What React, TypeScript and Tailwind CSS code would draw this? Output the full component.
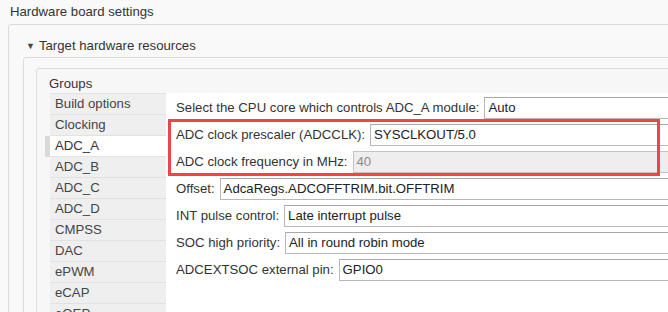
const groups = [
  "Build options",
  "Clocking",
  "ADC_A",
  "ADC_B",
  "ADC_C",
  "ADC_D",
  "CMPSS",
  "DAC",
  "ePWM",
  "eCAP",
  "eQEP",
];

const fields: { label: string; value: string; disabled?: boolean }[] = [
  { label: "Select the CPU core which controls ADC_A module:", value: "Auto" },
  { label: "ADC clock prescaler (ADCCLK):", value: "SYSCLKOUT/5.0" },
  { label: "ADC clock frequency in MHz:", value: "40", disabled: true },
  { label: "Offset:", value: "AdcaRegs.ADCOFFTRIM.bit.OFFTRIM" },
  { label: "INT pulse control:", value: "Late interrupt pulse" },
  { label: "SOC high priority:", value: "All in round robin mode" },
  { label: "ADCEXTSOC external pin:", value: "GPIO0" },
];

function Field({ label, value, disabled }: { label: string; value: string; disabled?: boolean }) {
  return (
    <div className="flex h-[27px] items-center gap-[5px] whitespace-nowrap">
      <span className="text-[#333]">{label}</span>
      <div
        className={
          disabled
            ? "flex h-[22px] flex-1 items-center border border-[#c4c4c4] bg-[#eeeeee] pl-[3px] text-[#8a8a8a]"
            : "flex h-[22px] flex-1 items-center border border-[#b8b8b8] border-t-[#a8a8a8] bg-white pl-[3px] text-[#222]"
        }
      >
        {value}
      </div>
    </div>
  );
}

export default function App() {
  return (
    <div
      className="relative h-[312px] w-[668px] overflow-hidden bg-[#f9f9f9] text-[13.2px] leading-[16px]"
      style={{ fontFamily: '"Liberation Sans", Arial, sans-serif' }}
    >
      <div className="h-[24px] pl-[10px] pt-[4px] text-[#333]">Hardware board settings</div>

      {/* outer panel */}
      <div className="ml-[8px] w-[720px] rounded-[3px] border border-[#dcdcdc] bg-[#f9f9f9]">
        <div className="flex h-[32px] items-start pl-[17px] pt-[13px] text-[#333]">
          <span className="mr-[4px] mt-[1px] text-[9px] leading-[14px] text-[#444]">▼</span>
          Target hardware resources
        </div>

        {/* inner panel */}
        <div className="ml-[14px] rounded-[3px] border border-[#dcdcdc] bg-[#f9f9f9] pl-[12px] pt-[10px]">
          {/* groups panel */}
          <div className="h-[300px] rounded-[3px] border border-[#dcdcdc] bg-[#f7f7f7]">
            <div className="h-[24px] pl-[12px] pt-[7px] text-[#333]">Groups</div>
            <div className="ml-[13px] flex bg-white">
              <div className="relative w-[116px] bg-[#efefef]">
                {groups.map((g) => (
                  <div
                    key={g}
                    className={
                      g === "ADC_A"
                        ? "relative flex h-[21px] items-center border-t border-[#e2e2e2] bg-white pl-[5px] text-[#333]"
                        : "flex h-[21px] items-center border-t border-[#e2e2e2] pl-[5px] text-[#444]"
                    }
                  >
                    {g === "ADC_A" && (
                      <div className="absolute left-[-5px] top-0 h-[21px] w-[5px] bg-[#d9d9d9]" />
                    )}
                    {g}
                  </div>
                ))}
              </div>
              <div className="flex-1 pl-[10px] pt-[1px]">
                {fields.map((f) => (
                  <Field key={f.label} {...f} />
                ))}
              </div>
            </div>
          </div>
        </div>
      </div>

      {/* highlight annotation */}
      <div className="absolute left-[168px] top-[119px] h-[57px] w-[492px] border-[3px] border-[#f0434a]" />
    </div>
  );
}
